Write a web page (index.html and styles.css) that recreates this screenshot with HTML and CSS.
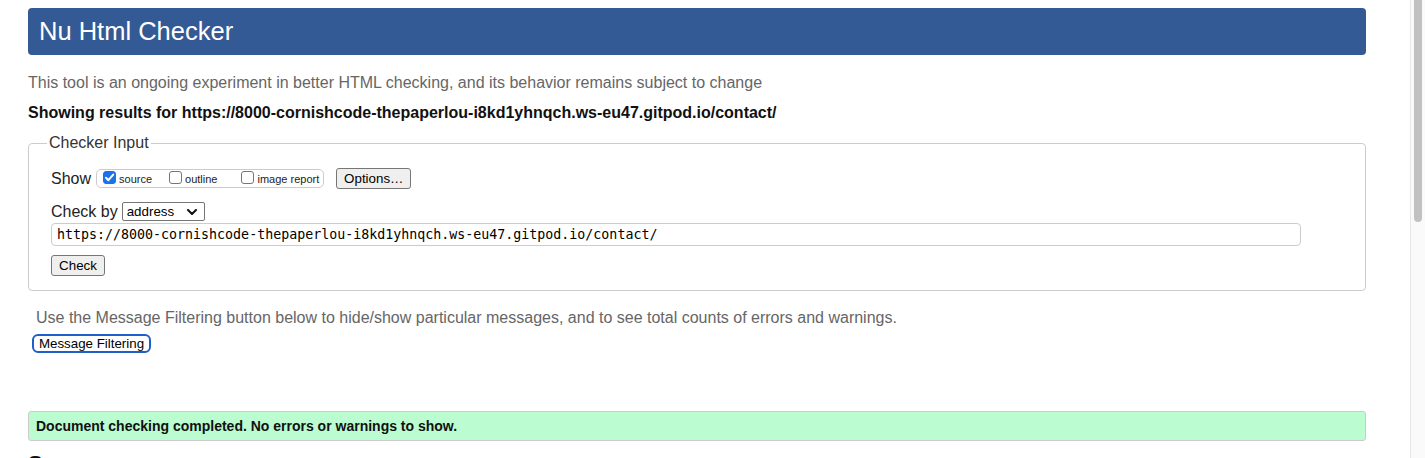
FILE: index.html
```html
<!DOCTYPE html>
<html lang="en">
<head>
<meta charset="utf-8">
<title>Nu Html Checker</title>
<link rel="stylesheet" href="styles.css">
</head>
<body>
<div class="page">
  <h1 class="banner">Nu Html Checker</h1>
  <p class="intro">This tool is an ongoing experiment in better HTML checking, and its behavior remains subject to change</p>
  <p class="results">Showing results for https://8000-cornishcode-thepaperlou-i8kd1yhnqch.ws-eu47.gitpod.io/contact/</p>
  <fieldset class="checker">
    <legend>Checker Input</legend>
    <div class="row show-row">
      <span class="label">Show</span>
      <span class="opts">
        <label class="opt"><span class="cb checked"><svg viewBox="0 0 13 13" width="13" height="13"><path d="M3 6.8 L5.4 9.2 L10.2 3.6" fill="none" stroke="#fff" stroke-width="2" stroke-linecap="round" stroke-linejoin="round"/></svg></span>source</label>
        <label class="opt"><span class="cb"></span>outline</label>
        <label class="opt"><span class="cb"></span>image report</label>
      </span>
      <button class="btn options">Options…</button>
    </div>
    <div class="row by-row">
      <span class="label">Check by</span>
      <span class="select">address<svg viewBox="0 0 10 6" width="10" height="6"><path d="M1 1 L5 5 L9 1" fill="none" stroke="#111" stroke-width="2" stroke-linecap="round" stroke-linejoin="round"/></svg></span>
    </div>
    <div class="url">https://8000-cornishcode-thepaperlou-i8kd1yhnqch.ws-eu47.gitpod.io/contact/</div>
    <button class="btn check">Check</button>
  </fieldset>
  <p class="filter-note">Use the Message Filtering button below to hide/show particular messages, and to see total counts of errors and warnings.</p>
  <button class="filter-btn">Message Filtering</button>
  <div class="success">Document checking completed. No errors or warnings to show.</div>
  <h2 class="source">Source</h2>
</div>
<div class="scrollbar"><div class="thumb"></div></div>
</body>
</html>
```
FILE: styles.css
```css
html, body {
  margin: 0;
  padding: 0;
  overflow: hidden;
  background: #fff;
  height: 458px;
}
body {
  font-family: "Liberation Sans", Arial, sans-serif;
  color: #000;
}
.page {
  padding: 8px 59px 0 28px;
}
.banner {
  margin: 0;
  height: 47px;
  line-height: 47px;
  padding-left: 11px;
  background: #345a96;
  color: #fff;
  font-size: 25.5px;
  font-weight: normal;
  border-radius: 4px;
}
.intro {
  margin: 18px 0 0;
  font-size: 16px;
  line-height: 20px;
  color: #666;
}
.results {
  margin: 10px 0 0;
  font-size: 16px;
  line-height: 20px;
  font-weight: bold;
  color: #111;
}
.checker {
  margin: 11px 0 0;
  padding: 0 22px 14px 22px;
  border: 1px solid #ccc;
  border-radius: 4px;
}
.checker legend {
  margin-left: -4px;
  padding: 0 2px;
  font-size: 16px;
  line-height: 18px;
  color: #333;
}
.row {
  display: flex;
  align-items: center;
}
.label {
  font-size: 16px;
  color: #222;
}
.show-row {
  margin-top: 16px;
  height: 21px;
}
.opts {
  display: flex;
  align-items: center;
  margin-left: 5px;
  height: 17px;
  padding: 0 4px 0 6px;
  border: 1px solid #ccc;
  border-radius: 5px;
}
.opt {
  display: flex;
  align-items: center;
  font-size: 11px;
  color: #222;
}
.opt + .opt { margin-left: 17px; }
.opt:nth-child(3) { margin-left: 24px; }
.cb {
  display: inline-block;
  box-sizing: border-box;
  width: 13px;
  height: 13px;
  border: 1px solid #767676;
  border-radius: 3px;
  background: #fff;
  margin: -2px 3px 0 0;
}
.cb svg { display: block; margin: -1px; }
.cb.checked {
  background: #1a73e8;
  border-color: #1a73e8;
}
.btn {
  font-family: "Liberation Sans", Arial, sans-serif;
  font-size: 13.33px;
  color: #000;
  background: #efefef;
  border: 1px solid #767676;
  border-radius: 3px;
  padding: 0 6px;
  height: 21px;
  line-height: 19px;
}
.options {
  margin-left: 12px;
  width: 75px;
}
.by-row {
  margin-top: 12px;
  height: 21px;
}
.select {
  box-sizing: border-box;
  display: inline-flex;
  align-items: center;
  justify-content: space-between;
  margin-left: 4px;
  width: 83px;
  height: 19px;
  padding: 0 7px 0 4px;
  border: 1px solid #767676;
  border-radius: 2px;
  font-size: 13.33px;
  color: #000;
}
.url {
  box-sizing: border-box;
  margin-top: 1px;
  width: 1250px;
  height: 23px;
  line-height: 21px;
  padding-left: 5px;
  border: 1px solid #ccc;
  border-radius: 4px;
  font-family: "DejaVu Sans Mono", "Liberation Mono", monospace;
  font-size: 13.3px;
  color: #000;
}
.check {
  display: block;
  margin-top: 9px;
  width: 54px;
}
.filter-note {
  margin: 17px 0 0 8px;
  font-size: 16px;
  line-height: 20px;
  color: #666;
}
.filter-btn {
  display: block;
  margin: 6px 0 0 4px;
  box-sizing: border-box;
  width: 119px;
  height: 19px;
  padding: 0;
  font-family: "Liberation Sans", Arial, sans-serif;
  font-size: 13.33px;
  line-height: 15px;
  color: #000;
  background: #fff;
  border: 2px solid #1f5fcc;
  border-radius: 6px;
}
.success {
  margin-top: 58px;
  box-sizing: border-box;
  height: 30px;
  line-height: 28px;
  padding-left: 7px;
  background: #bbfcd0;
  border: 1px solid #ccc;
  border-radius: 3px;
  font-size: 14px;
  font-weight: bold;
  color: #111;
}
.source {
  margin: 10px 0 0;
  font-size: 22px;
  line-height: 26px;
  color: #111;
}
.scrollbar {
  position: fixed;
  top: 0;
  right: 0;
  width: 15px;
  height: 100%;
  background: #fafafa;
  border-left: 1px solid #e8e8e8;
  box-sizing: border-box;
}
.thumb {
  margin: 0 auto;
  width: 8px;
  height: 222px;
  background: #c1c1c1;
  border-radius: 0 0 4px 4px;
}
```
